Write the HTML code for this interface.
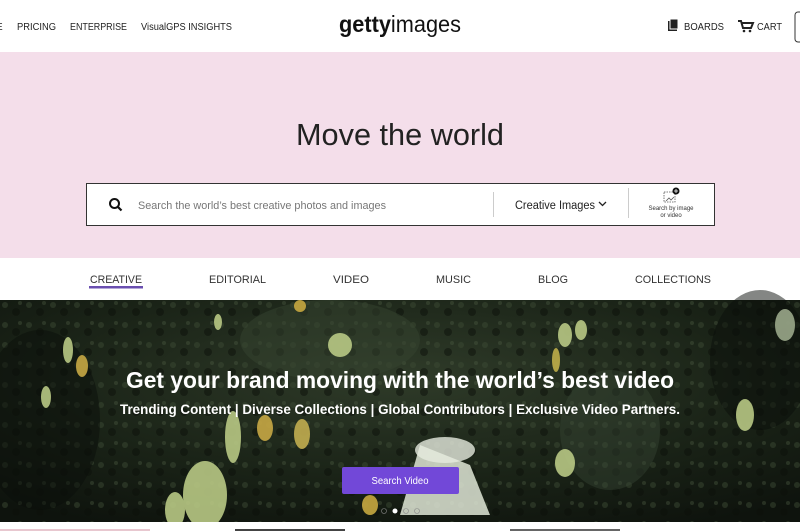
<!DOCTYPE html>
<html><head><meta charset="utf-8"><style>
*{margin:0;padding:0;box-sizing:border-box}
body{width:800px;height:531px;overflow:hidden;background:#fff;font-family:"Liberation Sans",sans-serif;position:relative}
svg text{font-family:"Liberation Sans",sans-serif}
</style></head><body>
<svg width="800" height="531" viewBox="0 0 800 531" style="position:absolute;left:0;top:0">
<defs>
<radialGradient id="g1" cx="0.5" cy="0.35" r="0.75">
<stop offset="0" stop-color="#2f3b29"/><stop offset="0.6" stop-color="#1a2317"/><stop offset="1" stop-color="#0e130d"/>
</radialGradient>
<pattern id="leaf" width="24" height="20" patternUnits="userSpaceOnUse">
<circle cx="5" cy="5" r="3" fill="#3c4a33" opacity="0.5"/><circle cx="16" cy="12" r="4" fill="#0b0f0a" opacity="0.5"/><circle cx="20" cy="3" r="2" fill="#4a5a40" opacity="0.4"/>
</pattern>
</defs>
<rect x="0" y="0" width="800" height="52" fill="#fff"/>
<g font-size="10" fill="#222">
<text x="-4" y="30">E</text>
<text x="17" y="30" textLength="39" lengthAdjust="spacingAndGlyphs">PRICING</text>
<text x="70" y="30" textLength="57" lengthAdjust="spacingAndGlyphs">ENTERPRISE</text>
<text x="141" y="30" textLength="91" lengthAdjust="spacingAndGlyphs">VisualGPS INSIGHTS</text>
<text x="684" y="30" textLength="40" lengthAdjust="spacingAndGlyphs">BOARDS</text>
<text x="757" y="30" textLength="25" lengthAdjust="spacingAndGlyphs">CART</text>
</g>
<text x="339" y="32" font-size="23" fill="#111" textLength="122" lengthAdjust="spacingAndGlyphs"><tspan font-weight="bold">getty</tspan>images</text>
<rect x="668" y="21" width="9" height="10" fill="#222"/><rect x="670" y="19" width="8" height="10" fill="#222" stroke="#fff" stroke-width="1"/>
<path d="M738 21h3l2 7h8l2-5h-11" fill="none" stroke="#222" stroke-width="2"/><circle cx="744" cy="31" r="1.3" fill="#222"/><circle cx="750" cy="31" r="1.3" fill="#222"/>
<rect x="795" y="12" width="10" height="30" rx="3" fill="none" stroke="#333" stroke-width="1"/>
<rect x="0" y="52" width="800" height="206" fill="#f4deea"/>
<text x="400" y="145" font-size="31" fill="#222" text-anchor="middle" textLength="208" lengthAdjust="spacingAndGlyphs">Move the world</text>
<rect x="86.5" y="183.5" width="628" height="42" fill="#fff" stroke="#333" stroke-width="1"/>
<circle cx="114.5" cy="203.5" r="4.5" fill="none" stroke="#111" stroke-width="2"/><path d="M118 207l3.5 3.5" stroke="#111" stroke-width="2.2"/>
<text x="138" y="209" font-size="11" fill="#777" textLength="248" lengthAdjust="spacingAndGlyphs">Search the world’s best creative photos and images</text>
<rect x="493" y="192" width="1" height="25" fill="#ccc"/>
<text x="515" y="209" font-size="11.5" fill="#222" textLength="80" lengthAdjust="spacingAndGlyphs">Creative Images</text>
<path d="M599 202l3.5 3.5 3.5-3.5" fill="none" stroke="#222" stroke-width="1.3"/>
<rect x="628" y="188" width="1" height="30" fill="#ccc"/>
<rect x="664" y="192" width="11" height="10" fill="none" stroke="#555" stroke-dasharray="1.5 1" stroke-width="0.8"/>
<path d="M666 201l3-3 2 2 3-3" fill="none" stroke="#555" stroke-width="0.8"/>
<circle cx="676" cy="191" r="3.5" fill="#111"/><path d="M676 189v4M674 191h4" stroke="#fff" stroke-width="0.8"/>
<text x="671" y="210" font-size="6" fill="#333" text-anchor="middle">Search by image</text>
<text x="671" y="217" font-size="6" fill="#333" text-anchor="middle">or video</text>
<rect x="0" y="258" width="800" height="42" fill="#fff"/>
<g font-size="11" fill="#333">
<text x="90" y="283" textLength="52" lengthAdjust="spacingAndGlyphs">CREATIVE</text>
<text x="209" y="283" textLength="57" lengthAdjust="spacingAndGlyphs">EDITORIAL</text>
<text x="333" y="283" textLength="36" lengthAdjust="spacingAndGlyphs">VIDEO</text>
<text x="436" y="283" textLength="35" lengthAdjust="spacingAndGlyphs">MUSIC</text>
<text x="538" y="283" textLength="30" lengthAdjust="spacingAndGlyphs">BLOG</text>
<text x="635" y="283" textLength="76" lengthAdjust="spacingAndGlyphs">COLLECTIONS</text>
</g>
<rect x="89" y="286" width="54" height="2.5" fill="#6a4fb0"/>
<rect x="0" y="300" width="800" height="222" fill="url(#g1)"/>
<rect x="0" y="300" width="800" height="222" fill="url(#leaf)"/>
<ellipse cx="330" cy="340" rx="90" ry="40" fill="#35432f" opacity="0.5"/>
<ellipse cx="610" cy="430" rx="50" ry="60" fill="#3a4838" opacity="0.4"/>
<ellipse cx="760" cy="360" rx="50" ry="70" fill="#0a0d09" opacity="0.5"/>
<ellipse cx="40" cy="420" rx="60" ry="90" fill="#0a0d09" opacity="0.5"/>
<g fill="#b8c884" opacity="0.9">
<ellipse cx="68" cy="350" rx="5" ry="13"/><ellipse cx="82" cy="366" rx="6" ry="11" fill="#c7a844"/>
<ellipse cx="46" cy="397" rx="5" ry="11"/><ellipse cx="218" cy="322" rx="4" ry="8"/>
<ellipse cx="340" cy="345" rx="12" ry="12"/><ellipse cx="233" cy="437" rx="8" ry="26"/>
<ellipse cx="265" cy="428" rx="8" ry="13" fill="#c7a844"/><ellipse cx="302" cy="434" rx="8" ry="15" fill="#c2ae50"/>
<ellipse cx="205" cy="495" rx="22" ry="34"/><ellipse cx="175" cy="510" rx="10" ry="18"/>
<ellipse cx="565" cy="335" rx="7" ry="12"/><ellipse cx="581" cy="330" rx="6" ry="10"/>
<ellipse cx="556" cy="360" rx="4" ry="12" fill="#bfae4a"/>
<ellipse cx="565" cy="463" rx="10" ry="14"/><ellipse cx="745" cy="415" rx="9" ry="16"/>
<ellipse cx="785" cy="325" rx="10" ry="16" fill="#9aa78a"/>
<ellipse cx="370" cy="505" rx="8" ry="10" fill="#c7a840"/>
<ellipse cx="300" cy="306" rx="6" ry="6" fill="#c7a840"/>
</g>
<path d="M400 515 L420 445 L470 465 L490 515Z" fill="#dfe6d6" opacity="0.85"/>
<ellipse cx="445" cy="450" rx="30" ry="13" fill="#e6ebde" opacity="0.8"/>
<text x="400" y="388" font-size="23" font-weight="bold" fill="#fff" text-anchor="middle" textLength="548" lengthAdjust="spacingAndGlyphs">Get your brand moving with the world’s best video</text>
<text x="400" y="414" font-size="14" font-weight="bold" fill="#fff" text-anchor="middle" textLength="560" lengthAdjust="spacingAndGlyphs">Trending Content | Diverse Collections | Global Contributors | Exclusive Video Partners.</text>
<rect x="342" y="467" width="117" height="27" rx="2" fill="#7248d8"/>
<text x="400" y="484" font-size="10" fill="#fff" text-anchor="middle" textLength="57" lengthAdjust="spacingAndGlyphs">Search Video</text>
<circle cx="384" cy="511" r="2.5" fill="none" stroke="#888" stroke-width="0.6"/>
<circle cx="395" cy="511" r="2.5" fill="#fff"/>
<circle cx="406" cy="511" r="2.5" fill="none" stroke="#888" stroke-width="0.6"/>
<circle cx="417" cy="511" r="2.5" fill="none" stroke="#888" stroke-width="0.6"/>
<rect x="0" y="522" width="800" height="9" fill="#fff"/>
<rect x="0" y="529" width="150" height="2" fill="#e8c8d0"/>
<rect x="235" y="529" width="110" height="2" fill="#444"/>
<rect x="510" y="529" width="110" height="2" fill="#666"/>
</svg>
</body></html>
